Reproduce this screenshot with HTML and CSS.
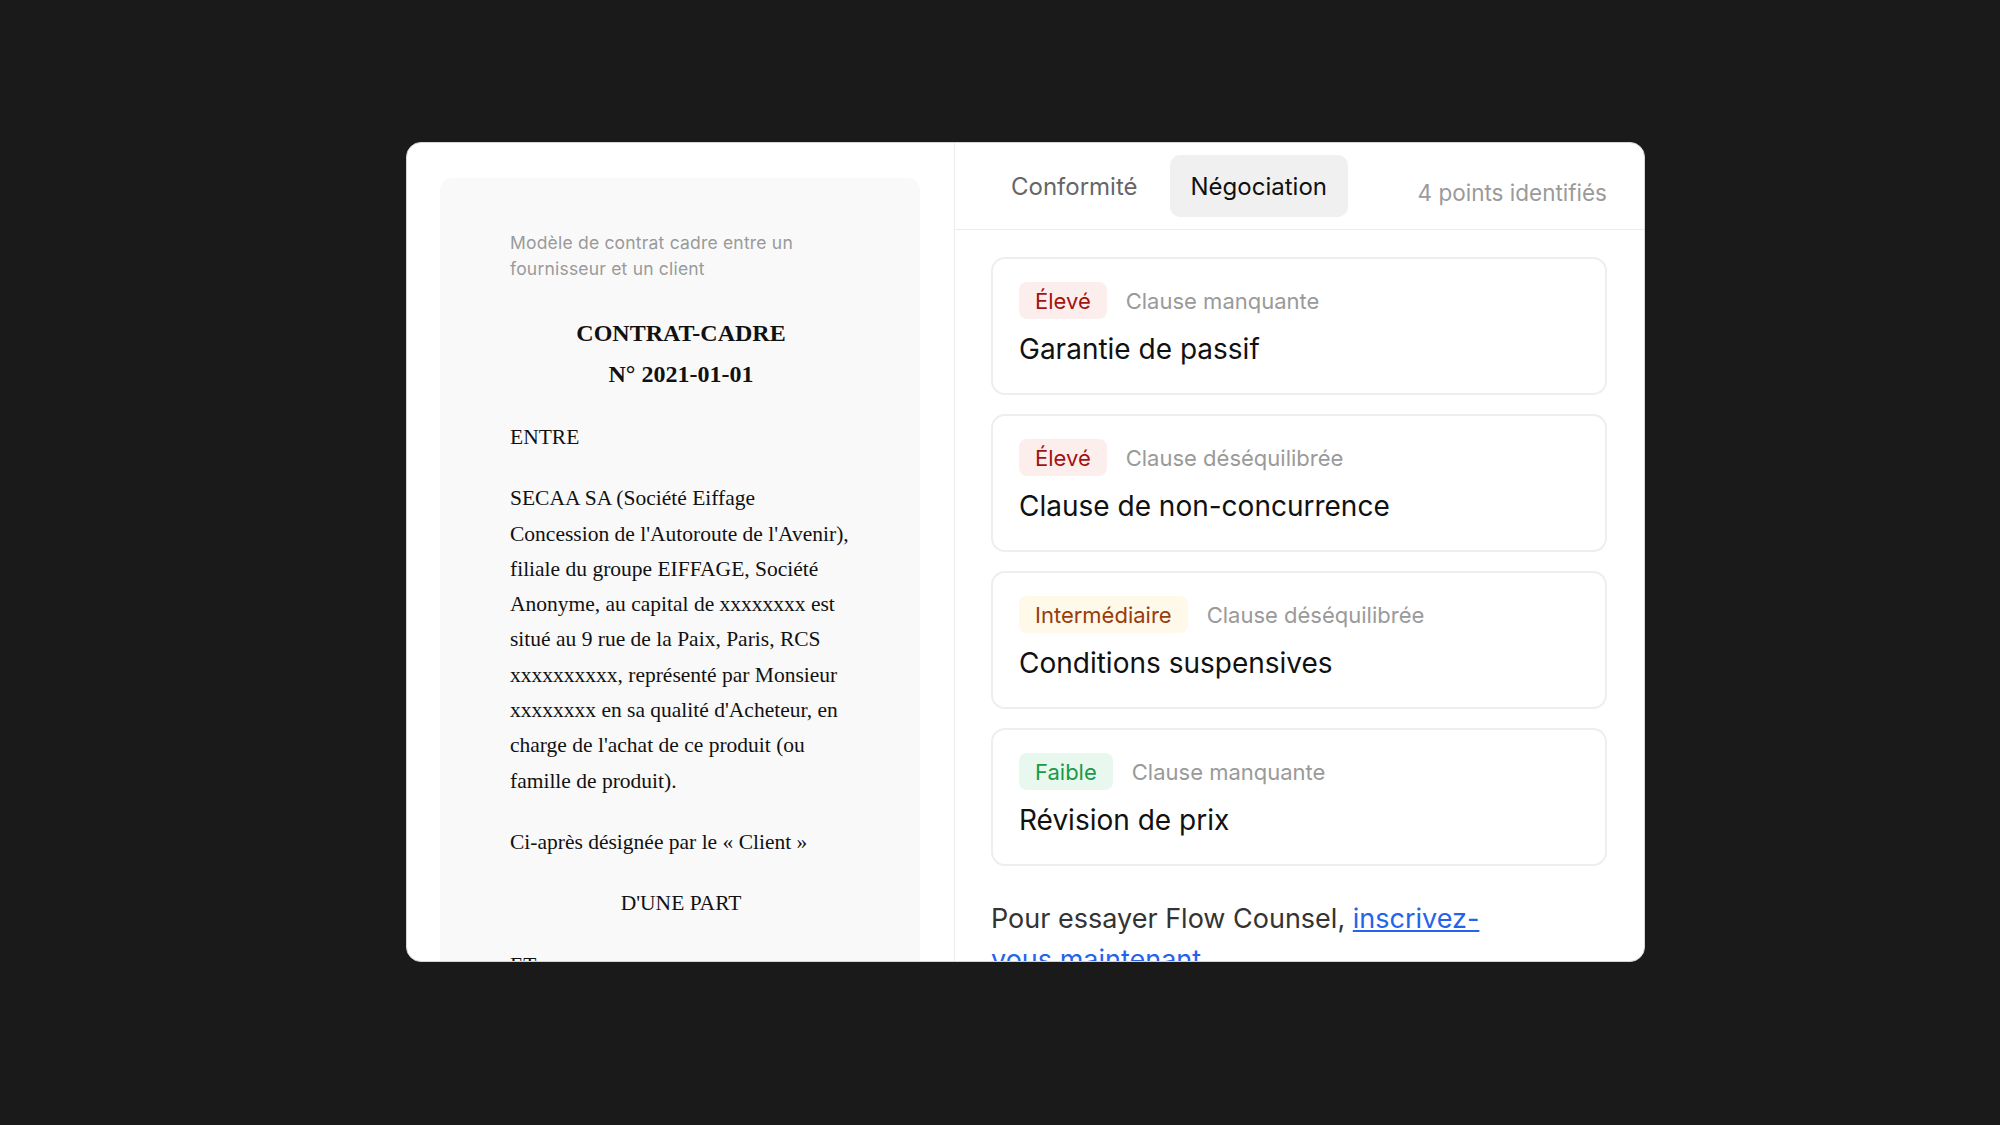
FILE: index.html
```html
<!DOCTYPE html>
<html lang="fr">
<head>
<meta charset="utf-8">
<title>Flow Counsel – Négociation</title>
<link rel="stylesheet" href="styles.css">
</head>
<body>
    <div class="stage">
        <main class="window">
            <section class="doc-pane">
                <article class="doc">
                    <p class="doc-subtitle">Modèle de contrat cadre entre un fournisseur et un client</p>
                    <h1 class="doc-title">CONTRAT-CADRE<br>N° 2021-01-01</h1>
                    <p>ENTRE</p>
                    <p>SECAA SA (Société Eiffage Concession de l'Autoroute de l'Avenir), filiale du groupe EIFFAGE, Société Anonyme, au capital de xxxxxxxx est situé au 9 rue de la Paix, Paris, RCS xxxxxxxxxx, représenté par Monsieur xxxxxxxx en sa qualité d'Acheteur, en charge de l'achat de ce produit (ou famille de produit).</p>
                    <p>Ci-après désignée par le « Client »</p>
                    <p class="center">D'UNE PART</p>
                    <p>ET</p>
                </article>
            </section>

            <section class="review-pane">
                <header class="tabs">
                    <button class="tab">Conformité</button>
                    <button class="tab active">Négociation</button>
                    <span class="count">4 points identifiés</span>
                </header>

                <div class="review-body">
                    <ul class="issues">
                        <li class="issue">
                            <div class="issue-meta">
                                <span class="badge high">Élevé</span>
                                <span class="kind">Clause manquante</span>
                            </div>
                            <h2 class="issue-title">Garantie de passif</h2>
                        </li>
                        <li class="issue">
                            <div class="issue-meta">
                                <span class="badge high">Élevé</span>
                                <span class="kind">Clause déséquilibrée</span>
                            </div>
                            <h2 class="issue-title">Clause de non-concurrence</h2>
                        </li>
                        <li class="issue">
                            <div class="issue-meta">
                                <span class="badge medium">Intermédiaire</span>
                                <span class="kind">Clause déséquilibrée</span>
                            </div>
                            <h2 class="issue-title">Conditions suspensives</h2>
                        </li>
                        <li class="issue">
                            <div class="issue-meta">
                                <span class="badge low">Faible</span>
                                <span class="kind">Clause manquante</span>
                            </div>
                            <h2 class="issue-title">Révision de prix</h2>
                        </li>
                    </ul>

                    <p class="signup">Pour essayer Flow Counsel, <a href="#">inscrivez-vous maintenant</a></p>
                </div>
            </section>
        </main>
    </div>
</body>
</html>
```

FILE: styles.css
```css
/**
 * Generic styles
 */
* {
    box-sizing: border-box;
}
html, body {
    margin: 0;
    height: 100%;
}
body {
    background-color: #1a1a1a;
    font-family: Inter, "Noto Sans", sans-serif;
    overflow: hidden;
}
p, h1, h2, ul {
    margin: 0;
    padding: 0;
}

/**
 * Window frame
 */
.stage {
    padding: 142px 0 0 406px;
}
.window {
    display: grid;
    grid-template-columns: 548px 1fr;
    width: 1239px;
    height: 820px;
    background-color: #fff;
    border: 1px solid #d4d4d4;
    border-radius: 15px;
    overflow: hidden;
}

/**
 * Contract preview (left)
 */
.doc-pane {
    padding: 35px 34px 0 33px;
    border-right: 1px solid #ececec;
}
.doc {
    height: 100%;
    background-color: #f9f9f9;
    border-radius: 12px;
    padding: 52px 68px 0 70px;
    font-family: "Liberation Serif", "Times New Roman", serif;
    font-size: 21.5px;
    line-height: 35.3px;
    color: #111;
}
.doc p {
    margin-bottom: 26px;
}
.doc .doc-subtitle {
    font-family: Inter, "Noto Sans", sans-serif;
    font-size: 17.5px;
    line-height: 26px;
    letter-spacing: 0.2px;
    color: #9a9a9a;
    margin-bottom: 31px;
}
.doc-title {
    font-size: 24px;
    line-height: 41px;
    font-weight: bold;
    text-align: center;
    margin-bottom: 25px;
}
.center {
    text-align: center;
}

/**
 * Review panel (right)
 */
.review-pane {
    display: flex;
    flex-direction: column;
    min-width: 0;
}
.tabs {
    display: flex;
    align-items: center;
    gap: 11px;
    height: 87px;
    padding: 0 37px 0 35px;
    border-bottom: 1px solid #ececec;
    flex-shrink: 0;
}
.tab {
    font-family: inherit;
    font-size: 24px;
    color: #666;
    background: none;
    border: 0;
    border-radius: 10px;
    height: 62px;
    padding: 0 21px;
}
.tab.active {
    background-color: #f0f0f0;
    color: #111;
}
.count {
    margin-left: auto;
    margin-top: 12px;
    font-size: 22.5px;
    color: #9a9a9a;
}

.review-body {
    padding: 27px 37px 0 36px;
}
.issues {
    list-style: none;
    display: flex;
    flex-direction: column;
    gap: 19px;
}
.issue {
    border: 2px solid #eeeeee;
    border-radius: 14px;
    padding: 23px 26px 27px;
}
.issue-meta {
    display: flex;
    align-items: center;
    gap: 19px;
}
.badge {
    display: inline-flex;
    align-items: center;
    height: 37px;
    padding: 0 16px;
    border-radius: 8px;
    font-size: 22px;
}
.badge.high {
    background-color: #fdeeee;
    color: #a3120f;
}
.badge.medium {
    background-color: #fef9e8;
    color: #9a3b0c;
}
.badge.low {
    background-color: #e8f8ee;
    color: #1a9a45;
}
.kind {
    font-size: 22px;
    color: #9a9a9a;
}
.issue-title {
    margin-top: 13px;
    font-size: 28px;
    line-height: 34px;
    font-weight: 400;
    color: #111;
}

.signup {
    margin-top: 32px;
    max-width: 530px;
    font-size: 27px;
    line-height: 41px;
    color: #333;
}
.signup a {
    color: #2563eb;
}
```
